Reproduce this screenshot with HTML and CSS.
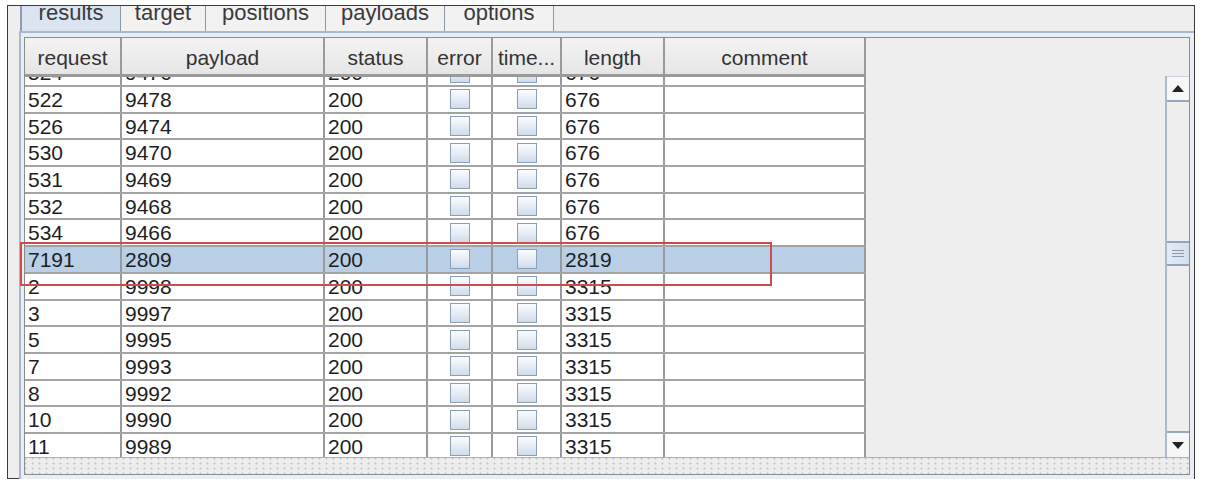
FILE: index.html
```html
<!DOCTYPE html>
<html>
<head>
<meta charset="utf-8">
<link rel="stylesheet" href="styles.css">
</head>
<body>
<div class="frame">
  <div class="tabs">
    <div class="tab sel" style="width:101px"><span>results</span></div>
    <div class="tab" style="width:85px"><span>target</span></div>
    <div class="tab" style="width:120px"><span>positions</span></div>
    <div class="tab" style="width:119px"><span>payloads</span></div>
    <div class="tab" style="width:109px"><span>options</span></div>
  </div>
  <div class="panel">
    <div class="scrollpane">
      <div class="main">
        <div class="viewport">
          <div class="thead">
            <div class="th">request</div>
            <div class="th">payload</div>
            <div class="th">status</div>
            <div class="th">error</div>
            <div class="th">time...</div>
            <div class="th">length</div>
            <div class="th">comment</div>
          </div>
          <div class="tbody">
            <div class="rows">
              <div class="tr"><div class="td">524</div><div class="td">9476</div><div class="td">200</div><div class="td cb"><i></i></div><div class="td cb"><i></i></div><div class="td">676</div><div class="td"></div></div>
              <div class="tr"><div class="td">522</div><div class="td">9478</div><div class="td">200</div><div class="td cb"><i></i></div><div class="td cb"><i></i></div><div class="td">676</div><div class="td"></div></div>
              <div class="tr"><div class="td">526</div><div class="td">9474</div><div class="td">200</div><div class="td cb"><i></i></div><div class="td cb"><i></i></div><div class="td">676</div><div class="td"></div></div>
              <div class="tr"><div class="td">530</div><div class="td">9470</div><div class="td">200</div><div class="td cb"><i></i></div><div class="td cb"><i></i></div><div class="td">676</div><div class="td"></div></div>
              <div class="tr"><div class="td">531</div><div class="td">9469</div><div class="td">200</div><div class="td cb"><i></i></div><div class="td cb"><i></i></div><div class="td">676</div><div class="td"></div></div>
              <div class="tr"><div class="td">532</div><div class="td">9468</div><div class="td">200</div><div class="td cb"><i></i></div><div class="td cb"><i></i></div><div class="td">676</div><div class="td"></div></div>
              <div class="tr"><div class="td">534</div><div class="td">9466</div><div class="td">200</div><div class="td cb"><i></i></div><div class="td cb"><i></i></div><div class="td">676</div><div class="td"></div></div>
              <div class="tr selected"><div class="td">7191</div><div class="td">2809</div><div class="td">200</div><div class="td cb"><i></i></div><div class="td cb"><i></i></div><div class="td">2819</div><div class="td"></div></div>
              <div class="tr"><div class="td">2</div><div class="td">9998</div><div class="td">200</div><div class="td cb"><i></i></div><div class="td cb"><i></i></div><div class="td">3315</div><div class="td"></div></div>
              <div class="tr"><div class="td">3</div><div class="td">9997</div><div class="td">200</div><div class="td cb"><i></i></div><div class="td cb"><i></i></div><div class="td">3315</div><div class="td"></div></div>
              <div class="tr"><div class="td">5</div><div class="td">9995</div><div class="td">200</div><div class="td cb"><i></i></div><div class="td cb"><i></i></div><div class="td">3315</div><div class="td"></div></div>
              <div class="tr"><div class="td">7</div><div class="td">9993</div><div class="td">200</div><div class="td cb"><i></i></div><div class="td cb"><i></i></div><div class="td">3315</div><div class="td"></div></div>
              <div class="tr"><div class="td">8</div><div class="td">9992</div><div class="td">200</div><div class="td cb"><i></i></div><div class="td cb"><i></i></div><div class="td">3315</div><div class="td"></div></div>
              <div class="tr"><div class="td">10</div><div class="td">9990</div><div class="td">200</div><div class="td cb"><i></i></div><div class="td cb"><i></i></div><div class="td">3315</div><div class="td"></div></div>
              <div class="tr"><div class="td">11</div><div class="td">9989</div><div class="td">200</div><div class="td cb"><i></i></div><div class="td cb"><i></i></div><div class="td">3315</div><div class="td"></div></div>
            </div>
          </div>
        </div>
        <div class="vbar">
          <div class="corner"></div>
          <div class="vscroll">
            <div class="btn up"><b></b></div>
            <div class="gap1"></div>
            <div class="thumb"><s></s><s></s><s></s></div>
            <div class="gap2"></div>
            <div class="btn down"><b></b></div>
          </div>
        </div>
      </div>
      <div class="hbar"></div>
    </div>
  </div>
  <div class="redbox"></div>
</div>
</body>
</html>
```

FILE: styles.css
```css
html, body {
  margin: 0;
  padding: 0;
  background: #ffffff;
}
body {
  font-family: "Liberation Sans", Arial, sans-serif;
  font-size: 21px;
  color: #1e1e1e;
}
.frame {
  position: relative;
  margin: 5px 0 0 7px;
  width: 1186px;
  height: 472px;
  border: 1px solid #3a3a3a;
  background: #eeeeee;
  display: flex;
  flex-direction: column;
}
.tabs {
  height: 25px;
  display: flex;
  padding-left: 12px;
  background: #eeeeee;
}
.tab {
  box-sizing: border-box;
  height: 25px;
  overflow: hidden;
  border-right: 1px solid #8d98a6;
  background: #f2f2f2;
  text-align: center;
  color: #3a3a3a;
}
.tab:first-child {
  border-left: 2px solid #8d9cb0;
}
.tab.sel {
  background: #dae5f1;
}
.tab span {
  display: block;
  font-size: 22px;
  line-height: 24px;
  margin-top: -5px;
}
.panel {
  flex: 1;
  margin-left: 11px;
  border-top: 2px solid #a8b9cc;
  border-left: 2px solid #a8b9cc;
  padding: 4px 4px 4px 3px;
  background: #e9eef4;
  display: flex;
  flex-direction: column;
}
.scrollpane {
  flex: 1;
  border: 1px solid #8c8c8c;
  display: flex;
  flex-direction: column;
  background: #eeeeee;
}
.main {
  display: flex;
  height: 419px;
}
.viewport {
  width: 1140px;
  display: flex;
  flex-direction: column;
  background: #eeeeee;
}
.thead {
  height: 39px;
  box-sizing: border-box;
  display: grid;
  grid-template-columns: 97px 203px 103px 65px 69px 103px 201px;
  width: 841px;
  border-bottom: 3px solid #9a9a9a;
  background: linear-gradient(#f3f3f3, #e6e6e6);
}
.th {
  border-right: 2px solid #9a9a9a;
  text-align: center;
  padding-top: 3px;
  line-height: 34px;
  color: #333333;
  white-space: nowrap;
  overflow: hidden;
}
.tbody {
  height: 380px;
  overflow: hidden;
}
.rows {
  margin-top: -16.7px;
  width: 841px;
}
.tr {
  display: grid;
  grid-template-columns: 97px 203px 103px 65px 69px 103px 201px;
  height: 26.7px;
  box-sizing: border-box;
  border-bottom: 2px solid #a3a3a3;
  background: #ffffff;
}
.tr.selected {
  background: #b8cfe5;
}
.td {
  border-right: 2px solid #9a9a9a;
  padding-left: 3px;
  line-height: 25px;
  white-space: nowrap;
  overflow: hidden;
}
.td.cb {
  display: flex;
  align-items: center;
  justify-content: center;
  padding-left: 0;
}
.td.cb i {
  display: block;
  width: 20px;
  height: 20px;
  box-sizing: border-box;
  border: 1px solid #8aa0b8;
  background: linear-gradient(#fbfdff, #d0dcea);
}
.vbar {
  width: 24px;
  display: flex;
  flex-direction: column;
}
.corner {
  height: 38px;
  background: #eeeeee;
}
.vscroll {
  flex: 1;
  display: flex;
  flex-direction: column;
  box-sizing: border-box;
  border-left: 2px solid #a9b9ca;
  background: #eeeeee;
}
.btn {
  height: 26px;
  box-sizing: border-box;
  background: #f7f7f7;
  display: flex;
  align-items: center;
  justify-content: center;
}
.btn.up {
  border-bottom: 2px solid #96a8bc;
  border-top: 1px solid #c9d2dc;
}
.btn.down {
  border-top: 2px solid #96a8bc;
}
.btn b {
  width: 0;
  height: 0;
  border-left: 6px solid transparent;
  border-right: 6px solid transparent;
}
.btn.up b {
  border-bottom: 7px solid #222222;
}
.btn.down b {
  border-top: 7px solid #222222;
}
.gap1 {
  height: 139px;
}
.gap2 {
  flex: 1;
}
.thumb {
  height: 25px;
  box-sizing: border-box;
  border-top: 2px solid #8ea5bd;
  border-bottom: 2px solid #8ea5bd;
  background: linear-gradient(90deg, #e4ecf5, #d2dfec);
  display: flex;
  flex-direction: column;
  align-items: center;
  justify-content: center;
  gap: 2px;
}
.thumb s {
  display: block;
  width: 12px;
  height: 1px;
  background: #8a9bb0;
}
.hbar {
  height: 16px;
  border-top: 1px solid #b0b0b0;
  background-color: #ededed;
  background-image: radial-gradient(circle, #c2c2c2 0.8px, transparent 1.2px);
  background-size: 7px 5px;
  background-position: 4px 3px;
}
.redbox {
  position: absolute;
  left: 12px;
  top: 236px;
  width: 752px;
  height: 44px;
  box-sizing: border-box;
  border: 2px solid #cf4c4c;
}
```
